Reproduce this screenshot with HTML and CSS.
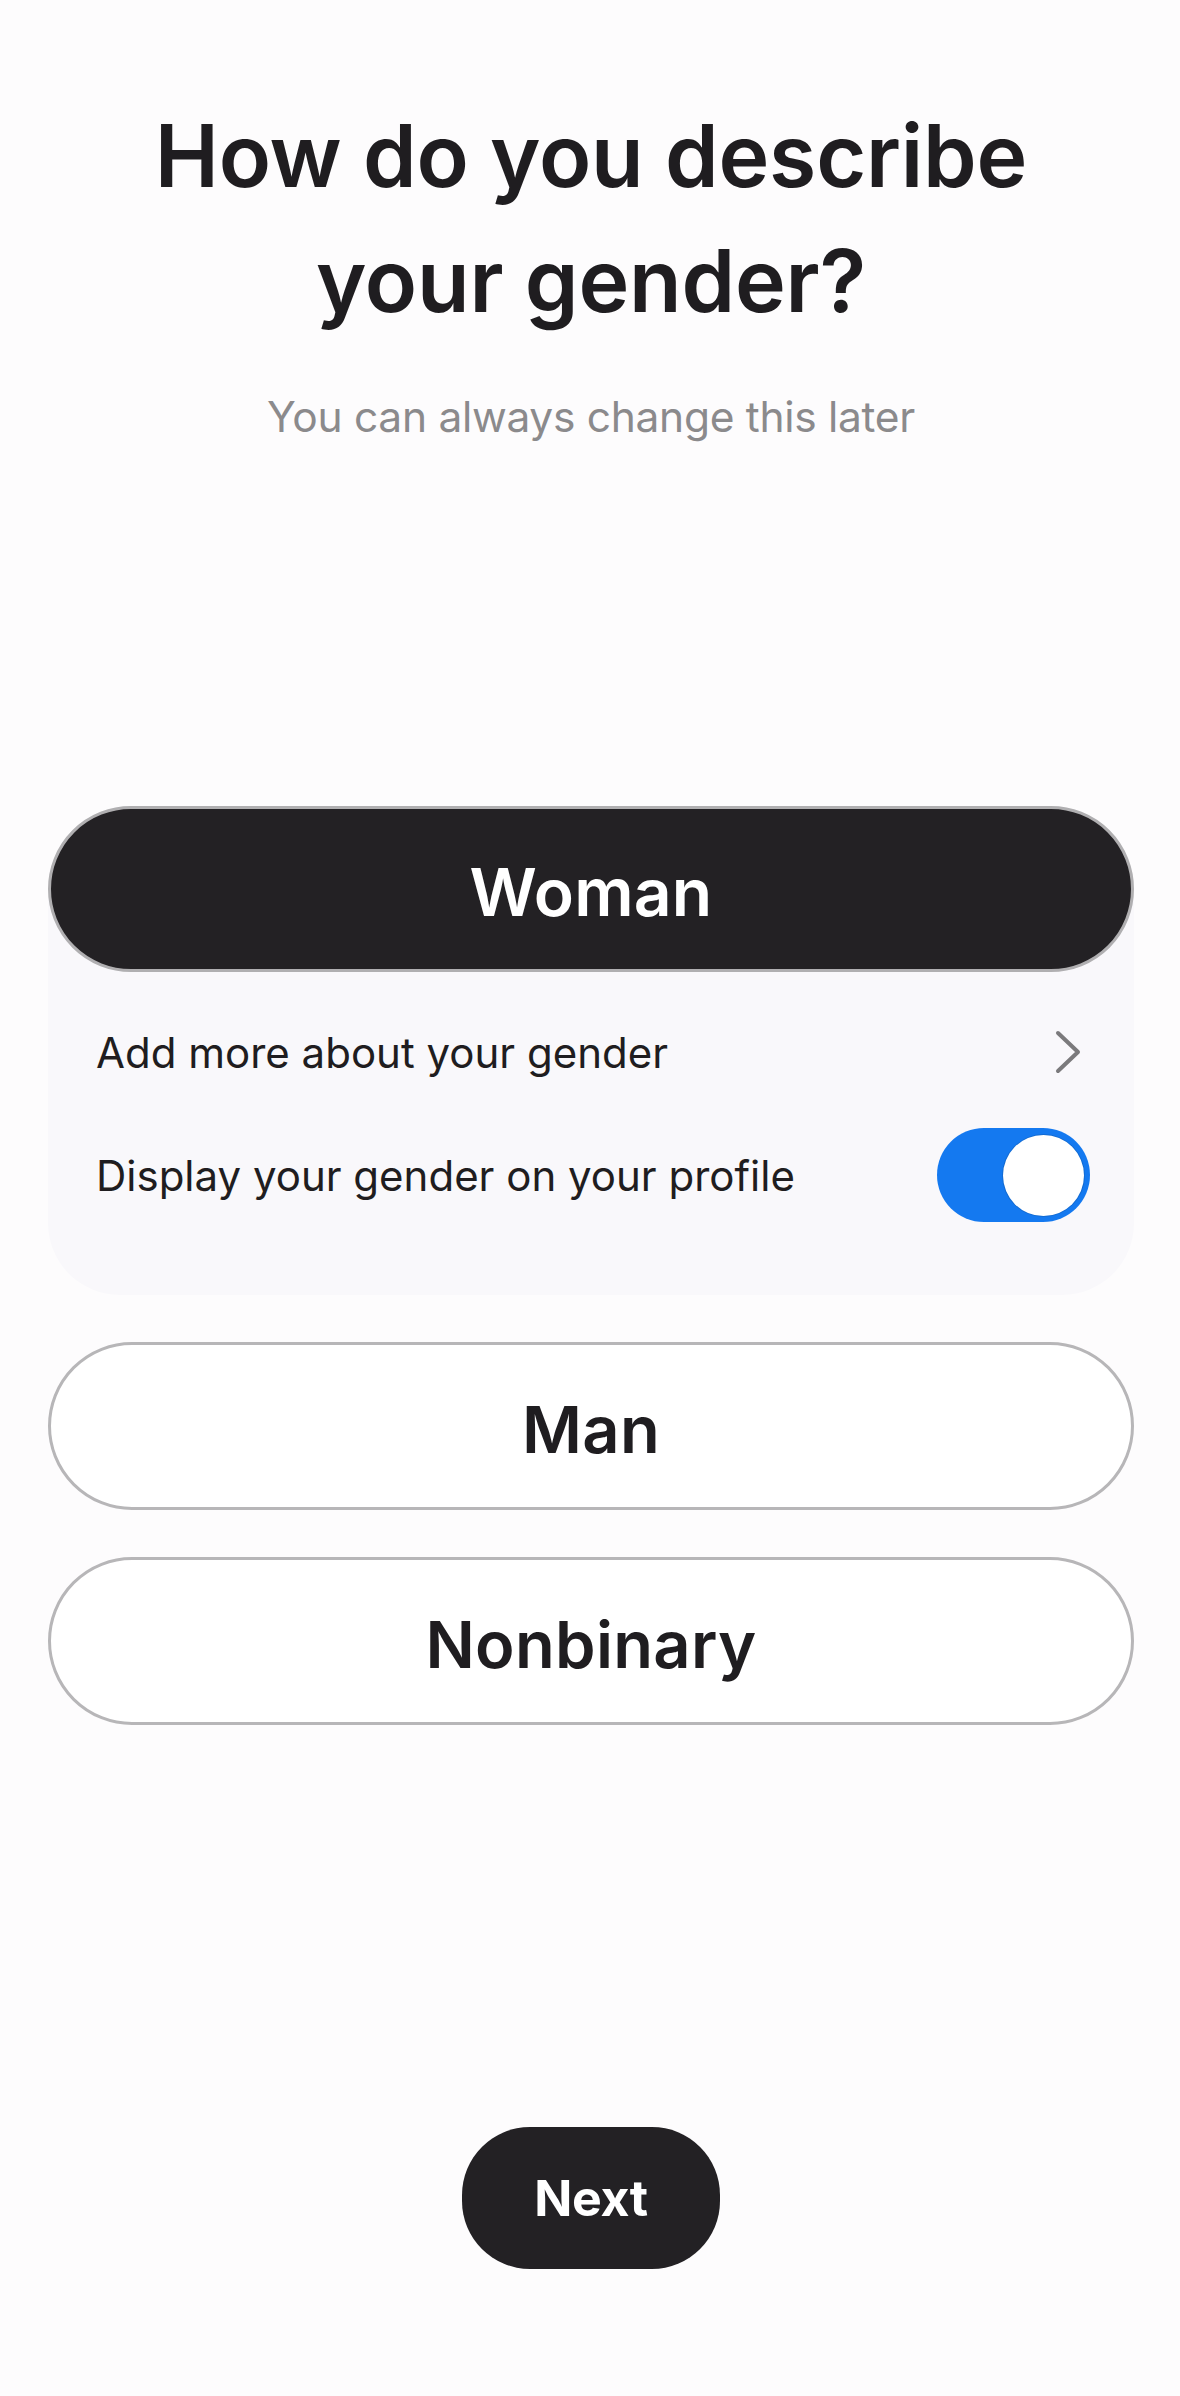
FILE: index.html
```html
<!DOCTYPE html>
<html lang="en">
<head>
<meta charset="utf-8">
<title>Gender</title>
<link rel="stylesheet" href="styles.css">
</head>
<body>
<main class="screen">
  <header class="intro">
    <h1 class="title">How do you describe<br>your gender?</h1>
    <p class="subtitle">You can always change this later</p>
  </header>

  <section class="options">
    <div class="card">
      <button class="option option--selected">Woman</button>
      <div class="rows">
        <div class="row">
          <span class="row-label">Add more about your gender</span>
          <svg class="chevron" width="28" height="44" viewBox="0 0 28 44" aria-hidden="true">
            <polyline points="4,3 24,22 4,41" fill="none" stroke="#7b7a7c" stroke-width="4" stroke-linecap="round" stroke-linejoin="round"/>
          </svg>
        </div>
        <div class="row">
          <span class="row-label">Display your gender on your profile</span>
          <span class="toggle" role="switch" aria-checked="true"><span class="knob"></span></span>
        </div>
      </div>
    </div>
    <button class="option">Man</button>
    <button class="option">Nonbinary</button>
  </section>

  <footer class="actions">
    <button class="next">Next</button>
  </footer>
</main>
</body>
</html>
```

FILE: styles.css
```css
* { box-sizing: border-box; }

html, body {
  margin: 0;
  padding: 0;
  background: #fdfcfd;
}

body {
  font-family: "Inter", "Noto Sans", "Liberation Sans", sans-serif;
  color: #1f1d20;
}

.screen {
  min-height: 2396px;
  display: flex;
  flex-direction: column;
  padding: 94px 46px 127px 48px;
}

.intro {
  text-align: center;
}

.title {
  margin: 0;
  font-size: 86px;
  line-height: 125px;
  font-weight: 600;
  letter-spacing: -0.2px;
  color: #1f1d20;
}

.subtitle {
  margin: 45px 0 0;
  font-size: 42.5px;
  line-height: 56px;
  font-weight: 400;
  color: #8b8a8c;
  letter-spacing: -0.3px;
}

.options {
  margin-top: 361px;
  display: flex;
  flex-direction: column;
  gap: 47px;
}

.card {
  background: #f9f8fb;
  border-radius: 84px 84px 72px 72px;
  padding-bottom: 75px;
}

.option {
  display: flex;
  align-items: center;
  justify-content: center;
  width: 100%;
  height: 168px;
  padding: 6px 0 0;
  border: 3px solid #b7b6b8;
  border-radius: 84px;
  background: #ffffff;
  font-family: inherit;
  font-size: 65px;
  font-weight: 600;
  letter-spacing: 0.3px;
  color: #1f1d20;
}

.option--selected {
  height: 166px;
  background: #232124;
  color: #ffffff;
  border-color: #b0afb1;
  font-size: 66px;
  letter-spacing: 0.2px;
}

.rows {
  display: flex;
  flex-direction: column;
  gap: 33px;
  padding: 35px 44px 0 48px;
}

.row {
  display: flex;
  align-items: center;
  justify-content: space-between;
  height: 90px;
}

.row-label {
  font-size: 42px;
  font-weight: 400;
  letter-spacing: 0;
  color: #1f1d20;
}

.chevron {
  margin-right: 8px;
}

.toggle {
  display: flex;
  align-items: center;
  justify-content: flex-end;
  width: 153px;
  height: 94px;
  padding: 0 6px;
  border-radius: 47px;
  background: #1479f0;
}

.knob {
  width: 81px;
  height: 81px;
  border-radius: 50%;
  background: #ffffff;
  box-shadow: 0 0 0 1px rgba(0, 0, 0, 0.12);
}

.actions {
  margin-top: auto;
  display: flex;
  justify-content: center;
}

.next {
  width: 258px;
  height: 142px;
  border: none;
  border-radius: 68px;
  background: #232124;
  color: #ffffff;
  font-family: inherit;
  font-size: 50px;
  font-weight: 700;
  letter-spacing: -0.3px;
  padding: 0;
}
```
